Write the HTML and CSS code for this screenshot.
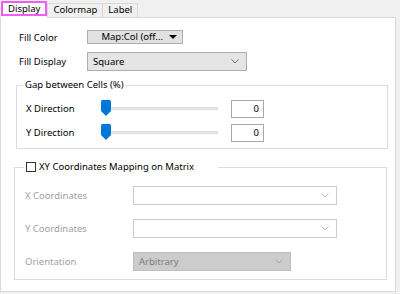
FILE: index.html
```html
<!DOCTYPE html>
<html lang="en">
<head>
  <meta charset="UTF-8">
  <title>Display</title>
  <link rel="stylesheet" href="styles.css">
</head>
<body>

  <div class="tabs">
    <div class="tab active"><span class="focus">Display</span></div>
    <div class="tab">Colormap</div>
    <div class="tab">Label</div>
  </div>

  <div class="panel">
    <div class="row fill-color">
      <span class="lbl">Fill Color</span>
      <div class="btn">Map:Col (off... <span class="tri"></span></div>
    </div>

    <div class="row fill-display">
      <span class="lbl">Fill Display</span>
      <div class="combo wide">
        <span>Square</span>
        <svg class="chev" width="8" height="5" viewBox="0 0 8 5"><path d="M0.5 0.5 L4 4 L7.5 0.5" fill="none" stroke="#6a6a6a" stroke-width="1"/></svg>
      </div>
    </div>

    <fieldset class="group gap">
      <legend>Gap between Cells (%)</legend>
      <div class="row slide">
        <span class="lbl">X Direction</span>
        <div class="slider">
          <div class="track"></div>
          <svg class="thumb" width="10" height="16" viewBox="0 0 10 16"><path d="M1.5 0 H8.5 Q10 0 10 1.5 V11 L5 16 L0 11 V1.5 Q0 0 1.5 0 Z" fill="#0078d7"/></svg>
        </div>
        <div class="num">0</div>
      </div>
      <div class="row slide">
        <span class="lbl">Y Direction</span>
        <div class="slider">
          <div class="track"></div>
          <svg class="thumb" width="10" height="16" viewBox="0 0 10 16"><path d="M1.5 0 H8.5 Q10 0 10 1.5 V11 L5 16 L0 11 V1.5 Q0 0 1.5 0 Z" fill="#0078d7"/></svg>
        </div>
        <div class="num">0</div>
      </div>
    </fieldset>

    <fieldset class="group xy">
      <legend><span class="check"></span>XY Coordinates Mapping on Matrix</legend>
      <div class="row off">
        <span class="lbl">X Coordinates</span>
        <div class="combo empty">
          <span></span>
          <svg class="chev" width="8" height="5" viewBox="0 0 8 5"><path d="M0.5 0.5 L4 4 L7.5 0.5" fill="none" stroke="#bdbdbd" stroke-width="1"/></svg>
        </div>
      </div>
      <div class="row off">
        <span class="lbl">Y Coordinates</span>
        <div class="combo empty">
          <span></span>
          <svg class="chev" width="8" height="5" viewBox="0 0 8 5"><path d="M0.5 0.5 L4 4 L7.5 0.5" fill="none" stroke="#bdbdbd" stroke-width="1"/></svg>
        </div>
      </div>
      <div class="row off">
        <span class="lbl">Orientation</span>
        <div class="combo grey">
          <span>Arbitrary</span>
          <svg class="chev" width="8" height="5" viewBox="0 0 8 5"><path d="M0.5 0.5 L4 4 L7.5 0.5" fill="none" stroke="#a8a8a8" stroke-width="1"/></svg>
        </div>
      </div>
    </fieldset>
  </div>

</body>
</html>
```

FILE: styles.css
```css
* { box-sizing: border-box; }
body {
  margin: 0;
  background: #f0f0f0;
  font-family: 'Noto Sans', 'Liberation Sans', sans-serif;
  font-size: 9.5px;
  color: #000;
  width: 400px;
  height: 294px;
  overflow: hidden;
}

/* tabs */
.tabs {
  display: flex;
  align-items: flex-end;
  height: 17px;
  padding-left: 1px;
}

.tab {
  height: 14px;
  line-height: 12px;
  padding: 0 5px;
  border: 1px solid #d9d9d9;
  border-bottom: none;
  margin-left: -1px;
  background: #f0f0f0;
}

.tab.active {
  height: 17px;
  padding: 0;
  margin: 0 1px -1px 0;
  background: #fff;
  border: none;
}

.tab .focus {
  display: block;
  height: 15px;
  line-height: 12px;
  padding: 0 5px;
  border: 2px solid #f25cf0;
}

/* panel */
.panel {
  width: 396px;
  height: 275px;
  background: #fff;
  border: 1px solid #dadada;
  padding-top: 12px;
}

.row {
  display: flex;
  align-items: center;
}

.fill-color { padding-left: 18px; height: 14px; }
.fill-display { padding-left: 18px; height: 19px; margin-top: 8px; }
.fill-color .lbl,
.fill-display .lbl { width: 68px; }

.btn {
  width: 96px;
  height: 14px;
  background: #e1e1e1;
  border: 1px solid #adadad;
  display: flex;
  align-items: center;
  justify-content: flex-end;
  padding-right: 5px;
  gap: 3px;
  line-height: 12px;
}

.tri {
  width: 0;
  height: 0;
  border-left: 4px solid transparent;
  border-right: 4px solid transparent;
  border-top: 4px solid #000;
  margin-left: 3px;
}

.combo {
  height: 19px;
  border: 1px solid #adadad;
  background: #e5e5e5;
  display: flex;
  align-items: center;
  justify-content: space-between;
  padding: 0 7px 0 5px;
}

.combo.wide { width: 160px; }
.combo.empty { width: 204px; background: #fff; border-color: #cccccc; }
.combo.grey { width: 158px; background: #cccccc; border-color: #bfbfbf; color: #7d7d7d; }

/* group boxes */
.group {
  margin: 0;
  border: 1px solid #dcdcdc;
  min-width: 0;
}

.group legend {
  padding: 0 2px;
  margin-left: -3px;
  line-height: 12px;
}

.gap {
  width: 372px;
  margin: 8px 0 0 15px;
  padding: 8px 0 6px 9px;
}

.slide { height: 19px; }
.slide + .slide { margin-top: 5px; }
.slide .lbl { width: 75px; }

.slider {
  position: relative;
  width: 117px;
  height: 19px;
  display: flex;
  align-items: center;
}

.track {
  width: 100%;
  height: 3px;
  background: #e7eaea;
  border: 1px solid #dcdcdc;
}

.thumb {
  position: absolute;
  left: 0;
  top: 1px;
}

.num {
  width: 33px;
  height: 18px;
  margin-left: 13px;
  border: 1px solid #a8a8a8;
  text-align: right;
  padding-right: 4px;
  line-height: 16px;
}

.xy {
  width: 373px;
  margin: 12px 0 0 13px;
  padding: 13px 0 8px 10px;
}

.xy legend {
  display: flex;
  align-items: center;
  margin-left: -1px;
  padding-right: 24px;
}

.check {
  width: 10px;
  height: 10px;
  border: 1px solid #333;
  background: #fff;
  margin-right: 3px;
}

.off { height: 19px; color: #a0a0a0; }
.off + .off { margin-top: 14px; }
.off .lbl { width: 108px; }
```
